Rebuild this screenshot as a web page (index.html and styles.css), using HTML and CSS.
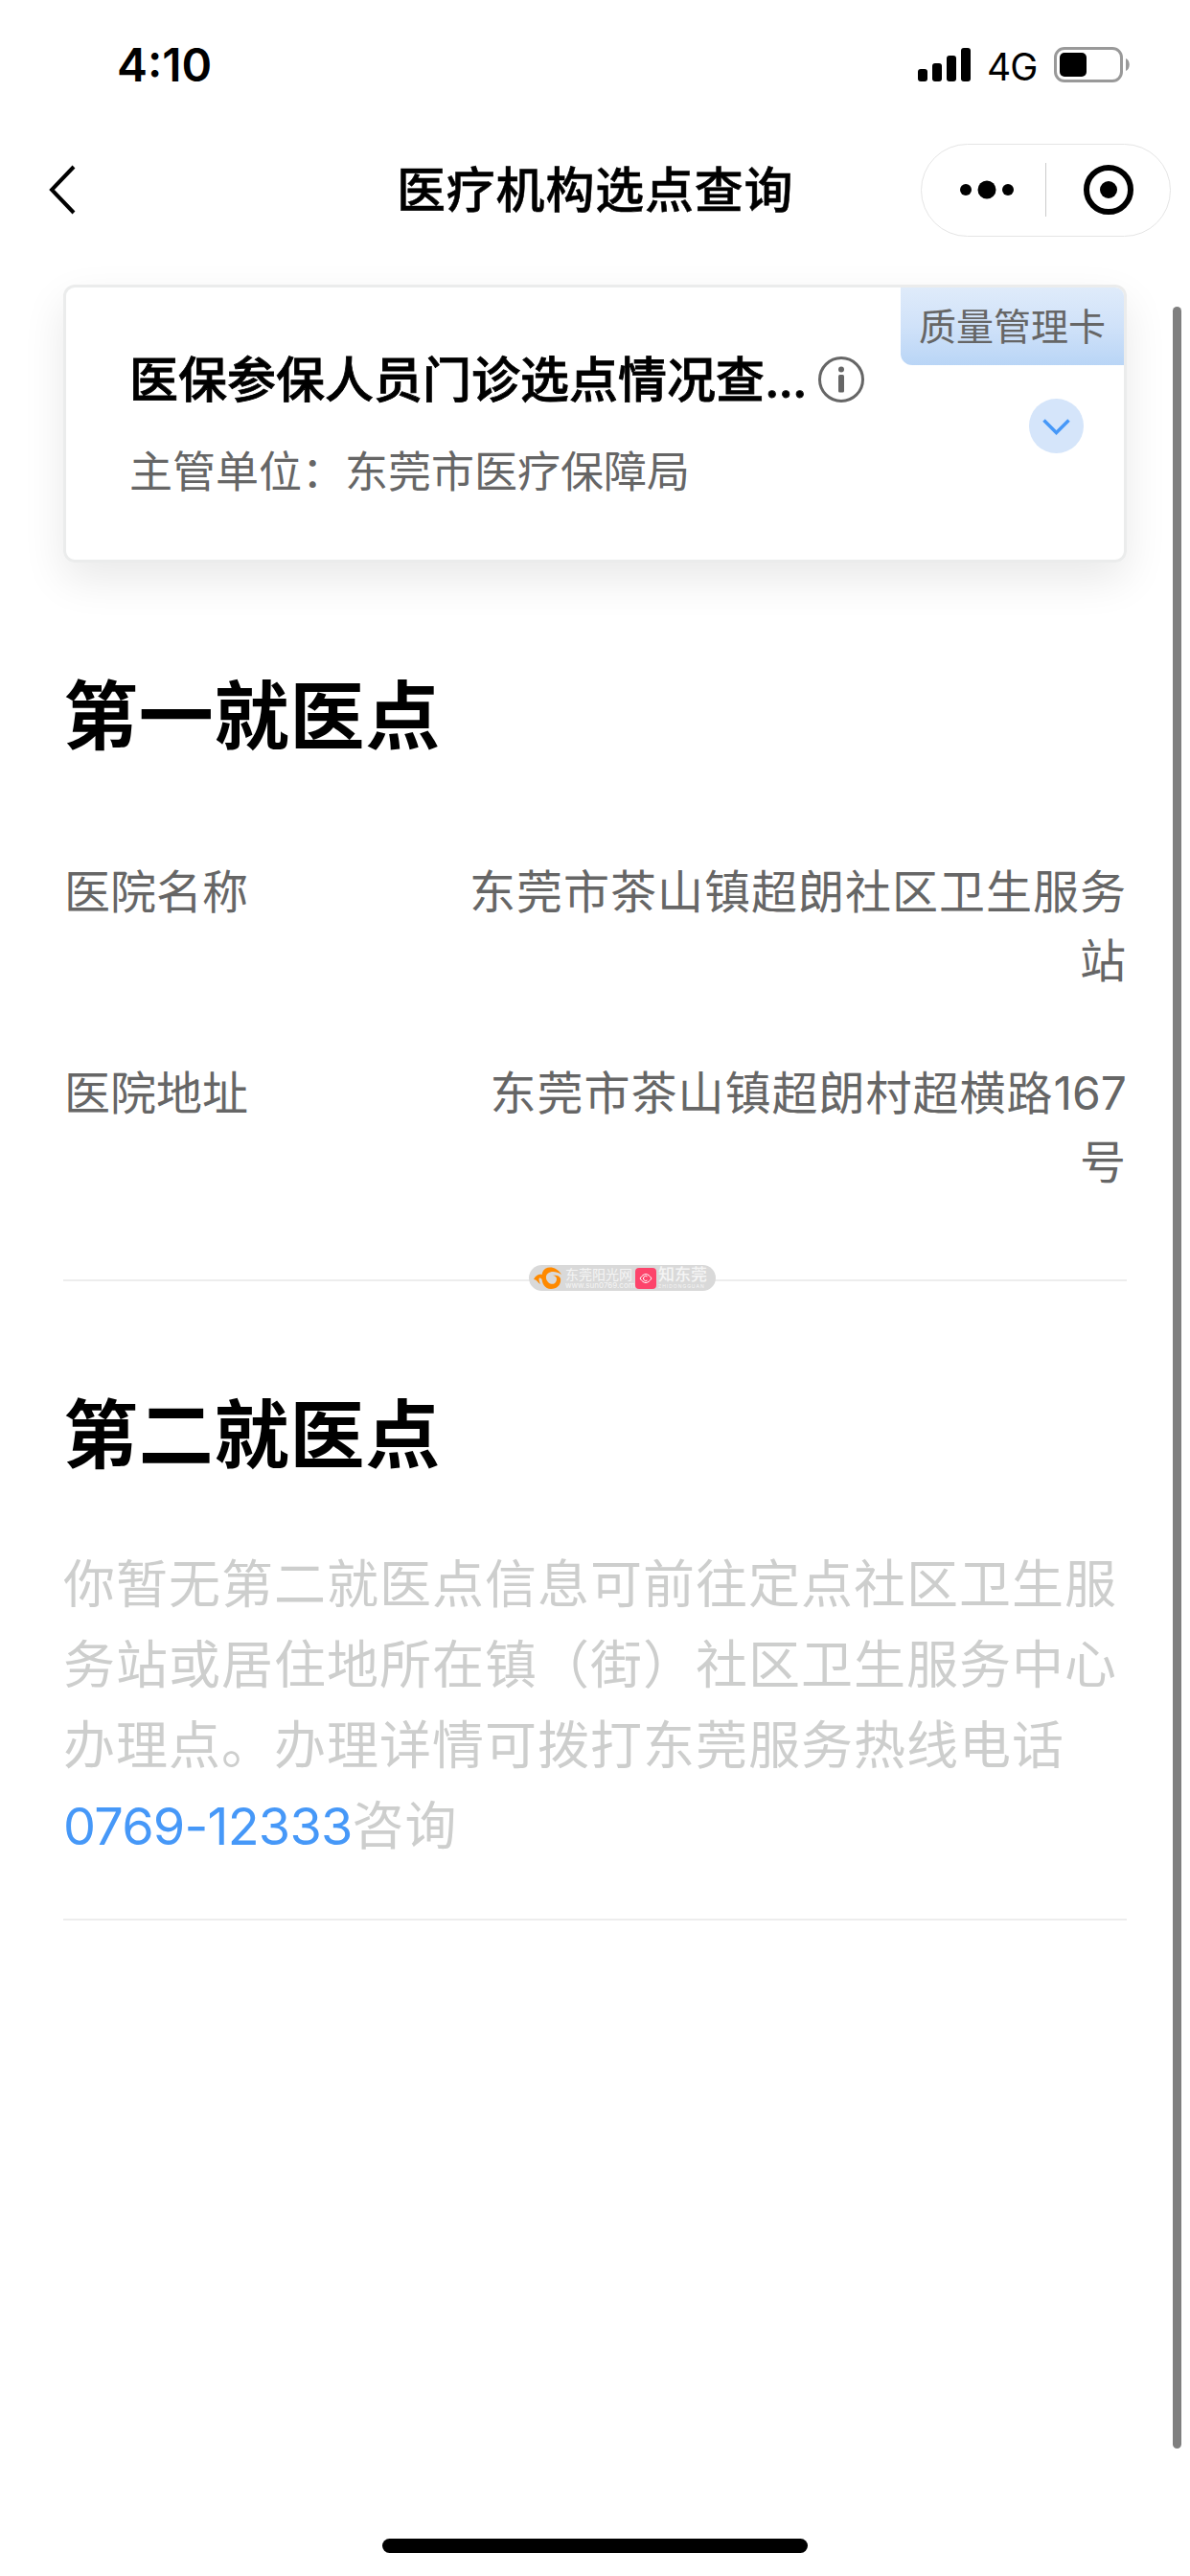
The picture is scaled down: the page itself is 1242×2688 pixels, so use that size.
FILE: index.html
```html
<!DOCTYPE html>
<html lang="zh-CN">
<head>
  <meta charset="UTF-8">
  <meta name="viewport" content="width=device-width, initial-scale=1.0">
  <title>医疗机构选点查询</title>
  <link rel="stylesheet" href="styles.css">
</head>
<body>
  <header class="header">
    <div class="status-bar">
      <span class="time">4:10</span>
      <div class="status-icons">
        <svg class="signal" width="55" height="35" viewBox="0 0 55 35">
          <rect x="0" y="22" width="10" height="13" rx="3"/>
          <rect x="15" y="16" width="10" height="19" rx="3"/>
          <rect x="30" y="8" width="10" height="27" rx="3"/>
          <rect x="45" y="0" width="10" height="35" rx="3"/>
        </svg>
        <span class="network">4G</span>
        <svg class="battery" width="79" height="37" viewBox="0 0 79 37">
          <rect x="1.5" y="1.5" width="69" height="34" rx="9.5" fill="none" stroke="#999" stroke-width="3"/>
          <rect x="6" y="6" width="28" height="25" rx="5"/>
          <path d="M75 12c5 2 5 11 0 13z" fill="#999"/>
        </svg>
      </div>
    </div>
    <nav class="nav">
      <svg class="back" width="32" height="54" viewBox="0 0 32 54">
        <path d="M27 3 4 27l23 24" fill="none" stroke="#000" stroke-width="4"/>
      </svg>
      <h1 class="nav-title">医疗机构选点查询</h1>
      <div class="capsule">
        <svg width="56" height="20" viewBox="0 0 56 20">
          <circle cx="6" cy="10" r="6"/>
          <circle cx="28" cy="10" r="9.5"/>
          <circle cx="50" cy="10" r="6"/>
        </svg>
        <span class="capsule-line"></span>
        <svg width="52" height="52" viewBox="0 0 52 52">
          <circle cx="26" cy="26" r="23" fill="none" stroke="#000" stroke-width="6"/>
          <circle cx="26" cy="26" r="9"/>
        </svg>
      </div>
    </nav>
  </header>

  <main class="content">
    <div class="card">
      <div class="card-title">
        <span>医保参保人员门诊选点情况查<span class="dots">...</span></span>
        <svg width="48" height="48" viewBox="0 0 48 48">
          <circle cx="24" cy="24" r="22.5" fill="none" stroke="#666" stroke-width="3"/>
          <circle cx="24" cy="13.5" r="3" fill="#666"/>
          <rect x="21" y="19" width="6" height="18.5" rx="1.5" fill="#666"/>
        </svg>
      </div>
      <p class="card-unit">主管单位：东莞市医疗保障局</p>
      <span class="tag">质量管理卡</span>
      <svg class="toggle" width="57" height="57" viewBox="0 0 57 57">
        <circle cx="28.5" cy="28.5" r="28.5" fill="#d5e5fa"/>
        <path d="M15.5 22.500 28.500 35.500l13-13" fill="none" stroke="#4698f8" stroke-width="3.5"/>
      </svg>
    </div>

    <section class="section">
      <h2 class="section-title">第一就医点</h2>
      <dl class="info">
        <dt>医院名称</dt>
        <dd>东莞市茶山镇超朗社区卫生服务站</dd>
        <dt>医院地址</dt>
        <dd>东莞市茶山镇超朗村超横路<span class="number">167</span>号</dd>
      </dl>
      <div class="watermark">
        <svg width="31" height="24" viewBox="0 0 31 24">
          <path d="M29 8C24-1 12-2 9 6c-2 8 1 17 9 17 7 0 11-5 10-11-1-3-5-4-8-3 4 0 5 4 3 7-3 4-9 1-10-4-1-6 7-10 16-4z" fill="#ff8a00"/>
          <path d="M0 13c3-6 8-6 10-4l-1 4c-3-3-5-2-2 5-3-2-4-5-7-5z" fill="#ff8a00"/>
        </svg>
        <div class="mark-text mark-sun">
          <span class="mark-name">东莞阳光网</span>
          <span class="mark-url">www.sun0769.com</span>
        </div>
        <svg class="mark-eye" width="22" height="22" viewBox="0 0 22 22">
          <rect width="22" height="22" rx="4" fill="#fd446b"/>
          <path d="M5 11c4-6 8-6 12 0-4 6-8 6-12 0z" fill="none" stroke="#fff"/>
          <path d="M12.500 9a2.500 2.500 0 1 0 0 4" fill="none" stroke="#fff"/>
        </svg>
        <div class="mark-text">
          <span class="mark-name mark-big">知东莞</span>
          <span class="mark-en">ZHIDONGGUAN</span>
        </div>
      </div>
    </section>

    <section class="section section-empty">
      <h2 class="section-title">第二就医点</h2>
      <p class="empty">你暂无第二就医点信息可前往定点社区卫生服务站或居住地所在镇（街）社区卫生服务中心办理点。办理详情可拨打东莞服务热线电话<a class="phone" href="tel:0769-12333">0769-12333</a>咨询</p>
    </section>
  </main>

  <div class="scrollbar"></div>
  <div class="home-bar"></div>
</body>
</html>
```
FILE: styles.css
```css
* {
  box-sizing: border-box;
  margin: 0;
  padding: 0;
}

body {
  position: relative;
  height: 2688px;
  overflow: hidden;
  background-color: #fff;
  color: #000;
  font-family: Inter, "Noto Sans CJK SC", sans-serif;
}

svg {
  display: block;
  flex-shrink: 0;
}

.status-bar {
  display: flex;
  justify-content: space-between;
  height: 132px;
  padding: 49px 63px 0 122px;
}

.time {
  font-size: 48px;
  font-weight: 600;
  line-height: 38px;
}

.status-icons {
  display: flex;
  height: 37px;
}

.signal {
  margin-top: 1px;
}

.network {
  width: 87px;
  padding-left: 17px;
  font-size: 39px;
  line-height: 41px;
  letter-spacing: -1px;
}

.nav {
  display: grid;
  grid-template-columns: 364px 1fr 261px;
  align-items: center;
  height: 132px;
  padding: 0 20px 0 50px;
}

.nav-title {
  padding-top: 2px;
  font-size: 51px;
  font-weight: 500;
  line-height: 72px;
  letter-spacing: 0.8px;
  -webkit-text-stroke: 0.5px #000;
}

.capsule {
  display: flex;
  align-items: center;
  height: 97px;
  padding-left: 40px;
  border: 1px solid #e5e5e5;
  border-radius: 49px;
}

.capsule-line {
  width: 1px;
  height: 56px;
  margin: 0 39px 0 33px;
  background-color: #ccc;
}

.content {
  padding: 33px 66px 0;
}

.card {
  position: relative;
  height: 290px;
  padding: 61px 66px;
  border: 3px solid #ebecec;
  border-radius: 12px;
  box-shadow: 0 18px 45px rgba(0, 10, 5, 0.09);
}

.card-title {
  display: flex;
  align-items: center;
  gap: 13px;
  font-size: 51px;
  font-weight: 500;
  line-height: 72px;
  -webkit-text-stroke: 0.8px #000;
}

.card-title svg {
  margin-top: -2px;
}

.dots {
  letter-spacing: -1px;
}

.card-unit {
  margin-top: 28px;
  color: #666;
  font-size: 45px;
  line-height: 63px;
}

.tag {
  position: absolute;
  top: 0;
  right: 0;
  height: 81px;
  padding: 0 19px;
  border-radius: 0 9px 0 12px;
  background: linear-gradient(#dfebfa, #d0e2f9 50%, #b9d5f6);
  color: #666;
  font-size: 39px;
  line-height: 81px;
}

.toggle {
  position: absolute;
  top: 116px;
  right: 42px;
}

.section {
  position: relative;
  margin-top: 106px;
  padding-bottom: 86px;
  border-bottom: 2px solid #ededed;
}

.section-empty {
  padding-bottom: 54px;
}

.section-title {
  font-size: 78px;
  font-weight: 700;
  line-height: 110px;
  letter-spacing: 0.8px;
}

.info {
  display: grid;
  grid-template-columns: 1fr 710px;
  row-gap: 66px;
  margin-top: 92px;
  color: #666;
  font-size: 48px;
  line-height: 72px;
}

.info dt {
  padding-left: 1px;
}

.info dd {
  letter-spacing: 1px;
  text-align: right;
}

.number {
  letter-spacing: 0;
}

/* partner logos sitting on the divider */
.watermark {
  position: absolute;
  left: 486px;
  bottom: -12px;
  display: flex;
  align-items: center;
  width: 195px;
  height: 27px;
  padding-left: 5px;
  border-radius: 14px;
  background-color: #d9d9d9;
  color: #f5f5f5;
  white-space: nowrap;
}

.mark-text {
  display: flex;
  flex-direction: column;
  margin-left: 2px;
}

.mark-sun {
  width: 69px;
}

.mark-name {
  font-size: 14px;
  line-height: 15px;
}

.mark-url {
  font-size: 8px;
  line-height: 8px;
}

.mark-eye {
  margin-left: 4px;
}

.mark-big {
  font-size: 17px;
  font-weight: 500;
  line-height: 17px;
}

.mark-en {
  font-size: 5px;
  line-height: 6px;
  letter-spacing: 1px;
}

.empty {
  margin-top: 59px;
  color: #cdcecd;
  font-size: 54px;
  line-height: 84px;
  letter-spacing: 1px;
}

.phone {
  color: #4698f8;
  letter-spacing: -0.8px;
  text-decoration: none;
}

.scrollbar {
  position: absolute;
  top: 320px;
  right: 9px;
  width: 9px;
  height: 2235px;
  border-radius: 5px;
  background-color: #7f7f7f;
}

.home-bar {
  position: absolute;
  left: 399px;
  bottom: 24px;
  width: 444px;
  height: 15px;
  border-radius: 8px;
  background-color: #000;
}
```
